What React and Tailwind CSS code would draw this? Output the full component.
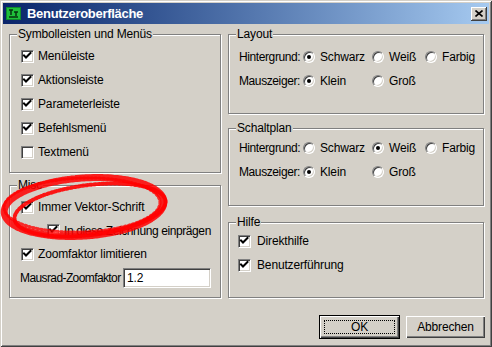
import React from "react";

function CheckBox({ checked }) {
    return (
        <span className="inline-block w-[13px] h-[13px] shrink-0 bg-white border border-t-[#808080] border-l-[#808080] border-r-white border-b-white shadow-[inset_1px_1px_0_#404040,inset_-1px_-1px_0_#d4d0c8]">
            {checked && (
                <svg width="11" height="11" viewBox="0 0 11 11" className="block">
                    <path d="M2 4.5 L4 6.5 L8.5 2" fill="none" stroke="#000" strokeWidth="2" strokeLinecap="square" />
                </svg>
            )}
        </span>
    );
}

function Radio({ checked }) {
    return (
        <span className="inline-flex items-center justify-center w-[12px] h-[12px] shrink-0 rounded-full bg-white border border-t-[#808080] border-l-[#808080] border-r-white border-b-white shadow-[inset_1px_1px_0_#404040,inset_-1px_-1px_0_#d4d0c8]">
            {checked && <span className="block w-[4px] h-[4px] rounded-full bg-black" />}
        </span>
    );
}

function Group({ label, className, children }) {
    return (
        <div className={"border border-[#808080] shadow-[1px_1px_0_#fff,inset_1px_1px_0_#fff] " + className}>
            <span className="block w-fit -mt-[8px] ml-[7px] px-[1px] bg-[#d4d0c8] leading-[14px] whitespace-nowrap">{label}</span>
            {children}
        </div>
    );
}

function CheckRow({ label, checked, className = "h-[24px] pl-[11px]" }) {
    return (
        <div className={"flex items-center gap-[4px] whitespace-nowrap " + className}>
            <CheckBox checked={checked} />
            <span>{label}</span>
        </div>
    );
}

function RadioRow({ label, options, selected }) {
    const widths = ["w-[69px]", "w-[53px]", "w-[50px]"];
    return (
        <div className="flex items-center h-[24px] pl-[10px] whitespace-nowrap">
            <span className="w-[64px] shrink-0 tracking-[-0.4px]">{label}</span>
            {options.map((o, i) => (
                <div key={o} className={"flex items-center gap-[5px] shrink-0 " + widths[i]}>
                    <Radio checked={i === selected} />
                    <span>{o}</span>
                </div>
            ))}
        </div>
    );
}

export default function App() {
    return (
        <div className="relative w-[492px] h-[347px] bg-[#d4d0c8] p-[3px] flex flex-col text-black text-[12px] tracking-[-0.15px] font-['Liberation_Sans',Arial,sans-serif] shadow-[inset_1px_1px_0_#d4d0c8,inset_-1px_-1px_0_#404040,inset_2px_2px_0_#fff,inset_-2px_-2px_0_#808080] overflow-hidden">
            {/* Titelleiste */}
            <div className="h-[21px] flex items-center pl-[3px] pr-[2px] bg-gradient-to-r from-[#0a246a] to-[#a6caf0]">
                <svg width="15" height="13" viewBox="0 0 15 13" className="shrink-0">
                    <rect x="0" y="0" width="15" height="13" fill="#0f8a2c" />
                    <rect x="1" y="1" width="13" height="11" fill="#1fbf3a" />
                    <path d="M3 3h4M5 3v5M8 5h4M10 5v4M3 10h9" stroke="#06330f" strokeWidth="1.5" fill="none" />
                </svg>
                <span className="ml-[6px] text-white font-bold text-[13px] tracking-[-0.3px] leading-none">Benutzeroberfläche</span>
                <div className="ml-auto w-[16px] h-[14px] bg-[#d4d0c8] flex items-center justify-center shadow-[inset_-1px_-1px_0_#404040,inset_1px_1px_0_#fff,inset_-2px_-2px_0_#808080]">
                    <svg width="8" height="7" viewBox="0 0 8 7">
                        <path d="M0.5 0.5 L7.5 6.5 M7.5 0.5 L0.5 6.5" stroke="#000" strokeWidth="1.6" />
                    </svg>
                </div>
            </div>

            <div className="flex gap-[7px] pl-[6px] pt-[3px]">
                {/* linke Spalte */}
                <div className="w-[212px] flex flex-col">
                    <Group label="Symbolleisten und Menüs" className="mt-[7px] h-[139px]">
                        <div className="pt-[3px]">
                            <CheckRow label="Menüleiste" checked />
                            <CheckRow label="Aktionsleiste" checked />
                            <CheckRow label="Parameterleiste" checked />
                            <CheckRow label="Befehlsmenü" checked />
                            <CheckRow label="Textmenü" checked={false} />
                        </div>
                    </Group>
                    <Group label="Misc" className="mt-[12px] h-[113px]">
                        <div className="pt-[3px]">
                            <CheckRow label="Immer Vektor-Schrift" checked />
                            <CheckRow label="In diese Zeichnung einprägen" checked className="h-[23px] pl-[37px] gap-[3px] tracking-[-0.4px]" />
                            <CheckRow label="Zoomfaktor limitieren" checked />
                            <div className="flex items-center h-[23px] pl-[10px] whitespace-nowrap">
                                <span className="w-[103px] shrink-0 tracking-[-0.6px]">Mausrad-Zoomfaktor</span>
                                <div className="w-[88px] h-[20px] bg-white border border-t-[#808080] border-l-[#808080] border-r-white border-b-white shadow-[inset_1px_1px_0_#404040,inset_-1px_-1px_0_#d4d0c8] flex items-center pl-[3px]">
                                    1.2
                                </div>
                            </div>
                        </div>
                    </Group>
                </div>

                {/* rechte Spalte */}
                <div className="w-[256px] flex flex-col">
                    <Group label="Layout" className="mt-[7px] h-[80px]">
                        <div className="pt-[4px]">
                            <RadioRow label="Hintergrund:" options={["Schwarz", "Weiß", "Farbig"]} selected={0} />
                            <RadioRow label="Mauszeiger:" options={["Klein", "Groß"]} selected={0} />
                        </div>
                    </Group>
                    <Group label="Schaltplan" className="mt-[14px] h-[78px]">
                        <div className="pt-[1px]">
                            <RadioRow label="Hintergrund:" options={["Schwarz", "Weiß", "Farbig"]} selected={1} />
                            <RadioRow label="Mauszeiger:" options={["Klein", "Groß"]} selected={0} />
                        </div>
                    </Group>
                    <Group label="Hilfe" className="mt-[16px] h-[76px]">
                        <div>
                            <CheckRow label="Direkthilfe" checked className="h-[24px] pl-[9px] gap-[6px]" />
                            <CheckRow label="Benutzerführung" checked className="h-[24px] pl-[9px] gap-[6px]" />
                        </div>
                    </Group>
                </div>
            </div>

            {/* Buttons */}
            <div className="flex items-center justify-end gap-[6px] mt-[17px] pr-[4px]">
                <button className="w-[81px] h-[24px] border border-black bg-[#d4d0c8] shadow-[inset_1px_1px_0_#fff,inset_-1px_-1px_0_#404040,inset_-2px_-2px_0_#808080] p-[4px]">
                    <span className="flex items-center justify-center h-full border border-dotted border-black leading-none">OK</span>
                </button>
                <button className="w-[79px] h-[22px] bg-[#d4d0c8] shadow-[inset_1px_1px_0_#fff,inset_-1px_-1px_0_#404040,inset_-2px_-2px_0_#808080] leading-none">
                    Abbrechen
                </button>
            </div>

            {/* rote Markierung */}
            <svg className="absolute left-0 top-0 pointer-events-none" width="492" height="347" viewBox="0 0 492 347">
                <g fill="none" stroke="#ff0000" strokeLinecap="round">
                    <ellipse cx="84" cy="207" rx="80" ry="29" transform="rotate(-4 84 207)" strokeWidth="7" strokeDasharray="3 1.5" opacity="0.85" />
                    <ellipse cx="90" cy="210" rx="76" ry="25" transform="rotate(-7 90 210)" strokeWidth="4" strokeDasharray="2 2" opacity="0.9" />
                    <ellipse cx="82" cy="205" rx="78" ry="27" transform="rotate(-2 82 205)" strokeWidth="3" strokeDasharray="1.5 2.5" opacity="0.8" />
                </g>
            </svg>
        </div>
    );
}
